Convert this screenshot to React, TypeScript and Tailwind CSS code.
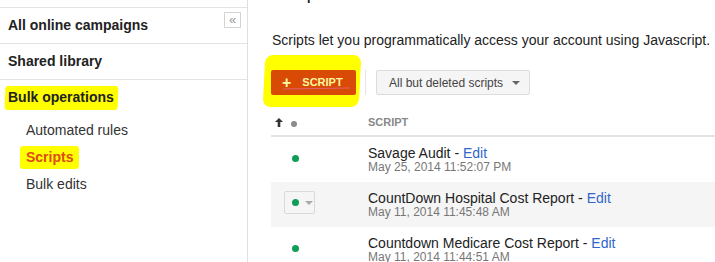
import React from 'react';

const rows = [
  { name: 'Savage Audit', date: 'May 25, 2014 11:52:07 PM', hover: false },
  { name: 'CountDown Hospital Cost Report', date: 'May 11, 2014 11:45:48 AM', hover: true },
  { name: 'Countdown Medicare Cost Report', date: 'May 11, 2014 11:44:51 AM', hover: false },
];

const Caret = ({ className }: { className?: string }) => (
  <svg width="8" height="4" viewBox="0 0 8 4" className={className}>
    <path d="M0 0 L8 0 L4 4 Z" fill="currentColor" />
  </svg>
);

const Sidebar: React.FC = () => (
  <div className="w-[248px] shrink-0 border-r border-[#e0e0e0] pt-[7px] h-[262px]">
    <div className="border-t border-[#e3e3e3] h-[36px] flex justify-between pl-[8px] pr-[6px]">
      <span className="font-bold text-[14px] text-[#222] leading-[35px]">All online campaigns</span>
      <button className="mt-[4px] w-[17px] h-[16px] border border-[#d4d4d4] bg-white flex items-center justify-center text-[#999] text-[13px] leading-none pb-[2px]">
        «
      </button>
    </div>
    <div className="border-t border-[#e3e3e3] h-[36px] pl-[8px]">
      <span className="font-bold text-[14px] text-[#222] leading-[35px]">Shared library</span>
    </div>
    <div className="border-t border-[#e3e3e3] pl-[8px] pt-[5px]">
      <span className="relative inline-block">
        <span className="absolute -left-[3px] -right-[4px] top-[1px] bottom-[-1px] bg-[#ffff00] rounded-[3px] -skew-x-2" />
        <span className="relative font-bold text-[14px] text-[#222] leading-[18px]">Bulk operations</span>
      </span>
    </div>
    <div className="pl-[26px] pt-[13px] flex flex-col gap-[11px] text-[14px] leading-[16px]">
      <span className="text-[#333]">Automated rules</span>
      <span className="relative inline-block self-start">
        <span className="absolute -left-[6px] -right-[6px] -top-[3px] -bottom-[4px] bg-[#ffff00] rounded-[3px]" />
        <span className="relative font-bold text-[#dd4b17]">Scripts</span>
      </span>
      <span className="text-[#333]">Bulk edits</span>
    </div>
  </div>
);

const App: React.FC = () => {
  return (
    <div
      className="w-[715px] h-[262px] overflow-hidden bg-white flex"
      style={{ fontFamily: '"Liberation Sans", Arial, sans-serif' }}
    >
      <Sidebar />

      <div className="flex-1 pl-[23px] overflow-hidden">
        <h1 className="text-[20px] leading-[24px] text-[#222] -mt-[20px] pl-[1px]">Scripts</h1>
        <p className="mt-[27px] pl-[1px] text-[14px] leading-[18px] text-[#222] whitespace-nowrap">
          Scripts let you programmatically access your account using Javascript.
        </p>

        {/* Toolbar */}
        <div className="mt-[21px] flex items-center h-[25px]">
          <div className="relative">
            <div className="absolute -left-[7px] -right-[4px] -top-[15px] -bottom-[12px] bg-[#ffff00] rounded-[8px] -skew-x-3" />
            <button className="relative w-[85px] h-[25px] bg-[#d84a06] rounded-[2px] flex items-center pl-[11px] gap-[11px] text-[11px] font-bold text-[#fdf7a0]">
              <span className="text-[16px] leading-none font-black">+</span>
              <span>SCRIPT</span>
              <span className="absolute left-[12px] right-[6px] top-[18px] h-[1px] bg-[#e06070] rounded-full rotate-[-1deg]" />
            </button>
          </div>
          <div className="w-px h-[25px] bg-[#e5e5e5] ml-[9px]" />
          <button className="ml-[10px] h-[25px] w-[154px] bg-[#f5f5f5] border border-[#dcdcdc] rounded-[2px] flex items-center pl-[12px] gap-[9px] text-[12px] text-[#444]">
            <span>All but deleted scripts</span>
            <Caret className="text-[#666]" />
          </button>
        </div>

        {/* Table */}
        <div className="mt-[15px]">
          <div className="h-[27px] border-b-2 border-[#e3e3e3] flex items-center">
            <div className="w-[97px] flex items-center pl-[4px] gap-[8px]">
              <svg width="8" height="9" viewBox="0 0 8 9" className="text-[#333]">
                <path d="M4 0 L8 4 L5.3 4 L5.3 9 L2.7 9 L2.7 4 L0 4 Z" fill="currentColor" />
              </svg>
              <span className="w-[6px] h-[6px] rounded-full bg-[#8a8a8a] mt-[2px]" />
            </div>
            <span className="text-[11px] font-bold text-[#888]">SCRIPT</span>
          </div>
          {rows.map((r, i) => (
            <div key={i} className={`h-[45px] flex items-center ${r.hover ? 'bg-[#f5f5f5]' : 'bg-white'}`}>
              <div className="w-[97px] pl-[14px] flex items-center">
                {r.hover ? (
                  <div className="w-[31px] h-[23px] border border-[#d9d9d9] rounded-[2px] flex items-center pl-[7px] gap-[6px] -ml-[1px] -mt-[4px]">
                    <span className="w-[7px] h-[7px] rounded-full bg-[#0f9d58]" />
                    <Caret className="text-[#aaa]" />
                  </div>
                ) : (
                  <span className="w-[7px] h-[7px] rounded-full bg-[#0f9d58] ml-[7px] -mt-[3px]" />
                )}
              </div>
              <div className="flex flex-col whitespace-nowrap">
                <span className="text-[14px] leading-[16px] text-[#222]">
                  {r.name} - <span className="text-[#3366cc]">Edit</span>
                </span>
                <span className="text-[12px] leading-[13px] text-[#777]">{r.date}</span>
              </div>
            </div>
          ))}
        </div>
      </div>
    </div>
  );
};

export default App;
